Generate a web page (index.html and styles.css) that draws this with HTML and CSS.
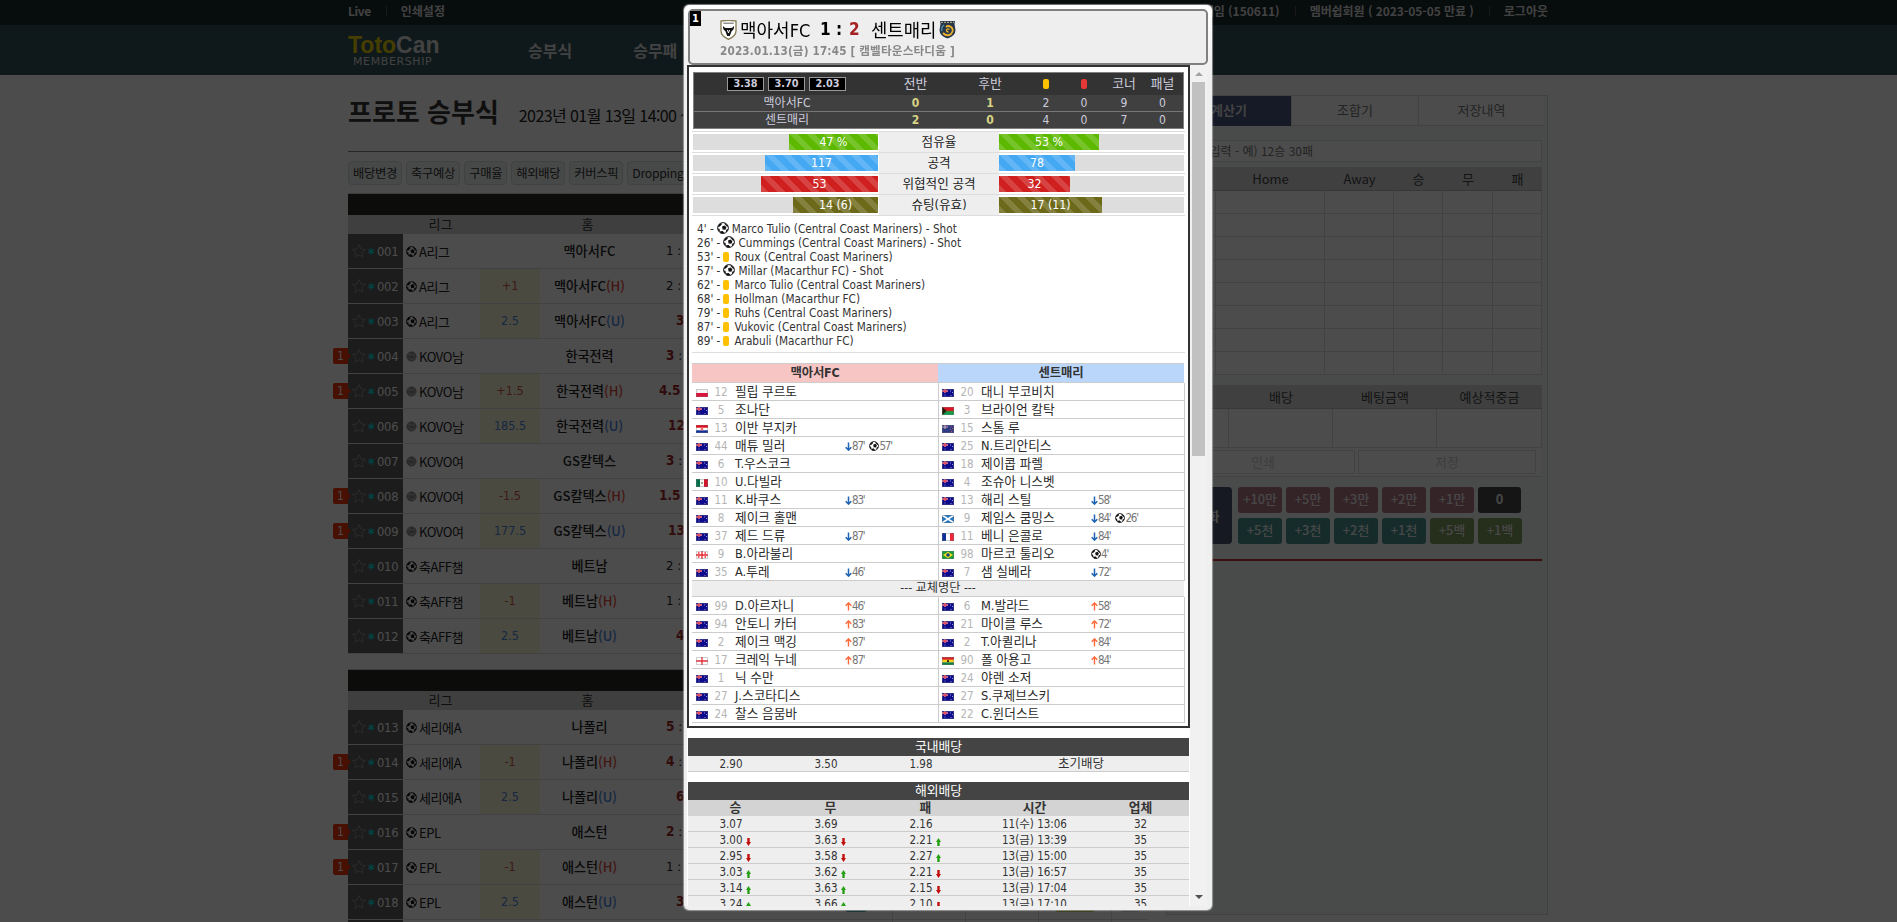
FILE: index.html
```
<!DOCTYPE html>
<html lang="ko">
<head>
<meta charset="utf-8">
<title>TotoCan - 프로토 승부식</title>
<link rel="stylesheet" href="styles.css">
</head>
<body>
<svg class="sprites" width="0" height="0">
  <symbol id="ball" viewBox="0 0 12 12"><circle cx="6" cy="6" r="5.400" fill="#fff" stroke="#222" stroke-width="1"/><path d="M5 4.600 7.600 3.400 9.400 5.200 8.400 7.800 5.600 7.400ZM.8 5l1.400-3 2.400-1 .2 1.600-2 2ZM7.500.8l3.200 2.400.4 1.600-1.300-.4L7.600 2ZM11.300 7l-1.600 3-1-.6.800-2ZM7.600 11.400H3.600L3 9.200 5.800 9ZM.6 6.400l1.800.4.6 2.400-1 .6Z" fill="#111"/></symbol>
  <symbol id="volley" viewBox="0 0 12 12"><circle cx="6" cy="6" r="5" fill="#b0b0b0" stroke="#777" stroke-width="1"/><path d="M2.500 4.500 5 8l1-3.500L7.500 8l2-3.500M2 7l2 2.500M5 2.500h3" fill="none" stroke="#666" stroke-width=".9"/></symbol>
  <symbol id="star" viewBox="0 0 16 16"><path d="M8 1.500 9.900 6l4.700.4-3.600 3.100 1.100 4.700L8 11.700l-4.100 2.500L5 9.500 1.400 6.400 6.100 6Z" fill="none" stroke="#8f8f8f" stroke-width="1"/></symbol>
  <symbol id="down" viewBox="0 0 7 9"><path d="M3.500.5v7.500M.7 5.200l2.800 2.900 2.800-2.900" fill="none" stroke="#1e63b4" stroke-width="1.500"/></symbol>
  <symbol id="up" viewBox="0 0 7 9"><path d="M3.500 8.500V1M.7 3.800 3.500.9l2.800 2.900" fill="none" stroke="#ff6a3c" stroke-width="1.400"/></symbol>
  <symbol id="fall" viewBox="0 0 5 8"><path d="M1.300 0h2.400v4H5L2.500 8 0 4h1.300Z" fill="#c40d0d"/></symbol>
  <symbol id="rise" viewBox="0 0 5 8"><path d="M1.300 8h2.400V4H5L2.500 0 0 4h1.300Z" fill="#25a015"/></symbol>
  <symbol id="au" viewBox="0 0 12 8"><path d="M0 0h12v8H0z" fill="#0b0b8c"/><path d="M0 2h6M3 0v4" stroke="#d9b6dd" stroke-width="1.300"/><path d="M0 2h6M3 0v4" stroke="#f0303a" stroke-width="1"/><path d="M2.500 6h1M8 2h1M10 3.500h1M8.500 6.500h1" stroke="#b9b9e6" stroke-width=".8"/></symbol>
  <symbol id="nz" viewBox="0 0 12 8"><path d="M0 0h12v8H0z" fill="#2c3a84"/><path d="M0 2h6M3 0v4" stroke="#c9a4b5" stroke-width="1.200"/><path d="M8.500 2h1M8 4.500h1M10 3.500h1M9 6.500h1" stroke="#d0526c" stroke-width=".9"/></symbol>
  <symbol id="pl" viewBox="0 0 12 8"><path d="M0 0h12v4H0z" fill="#f4f4f4"/><path d="M0 4h12v4H0z" fill="#dc143c"/></symbol>
  <symbol id="hr" viewBox="0 0 12 8"><path d="M0 0h12v3H0z" fill="#e00b1c"/><path d="M0 2.700h12v2.600H0z" fill="#fff"/><path d="M0 5.300h12V8H0z" fill="#10309a"/><path d="M4.800 2h2.400v3.500H4.800z" fill="#e86a6a"/></symbol>
  <symbol id="mx" viewBox="0 0 12 8"><path d="M0 0h4v8H0z" fill="#04704b"/><path d="M4 0h4v8H4z" fill="#f6f6f6"/><path d="M8 0h4v8H8z" fill="#d0142c"/><path d="M5.300 3h1.400v2H5.300z" fill="#8a7a50"/></symbol>
  <symbol id="ge" viewBox="0 0 12 8"><path d="M0 0h12v8H0z" fill="#fff"/><path d="M0 4h12M6 0v8M2 2h1.500M8.500 2H10M2 6h1.500M8.500 6H10" stroke="#e8202a" stroke-width="1.300"/></symbol>
  <symbol id="en" viewBox="0 0 12 8"><path d="M0 0h12v8H0z" fill="#fff"/><path d="M0 4h12M6 0v8" stroke="#e2303c" stroke-width="1.300"/></symbol>
  <symbol id="sc" viewBox="0 0 12 8"><path d="M0 0h12v8H0z" fill="#2174c4"/><path d="m0 0 12 8M12 0 0 8" stroke="#fff" stroke-width="1.700"/></symbol>
  <symbol id="fr" viewBox="0 0 12 8"><path d="M0 0h4v8H0z" fill="#10309a"/><path d="M4 0h4v8H4z" fill="#fff"/><path d="M8 0h4v8H8z" fill="#ee2438"/></symbol>
  <symbol id="br" viewBox="0 0 12 8"><path d="M0 0h12v8H0z" fill="#159a3c"/><path d="m6 .8 5 3.200-5 3.200L1 4Z" fill="#f5dc18"/><circle cx="6" cy="4" r="1.800" fill="#123b8c"/></symbol>
  <symbol id="vu" viewBox="0 0 12 8"><path d="M0 0h12v4H0z" fill="#dc1428"/><path d="M0 4h12v4H0z" fill="#139a4a"/><path d="M0 0l5 4-5 4Z" fill="#221c08"/><path d="M3 4h9" stroke="#8a5a10" stroke-width=".6"/></symbol>
  <symbol id="gh" viewBox="0 0 12 8"><path d="M0 0h12v3H0z" fill="#d8232a"/><path d="M0 2.700h12v2.700H0z" fill="#fad01c"/><path d="M0 5.300h12V8H0z" fill="#128040"/><path d="M5 3.300h2v1.600H5z" fill="#221c08"/></symbol>
</svg>

<div class="page">
  <div class="topbar"><div class="wrap topbar-in">
    <div class="links"><span class="live">Live</span><i></i><span>인쇄설정</span></div>
    <div class="links right"><span>닉네임 (150611)</span><i></i><span class="member">멤버쉽회원 ( 2023-05-05 만료 )</span><i></i><span>로그아웃</span></div>
  </div></div>
  <div class="nav"><div class="wrap nav-in">
    <div class="logo"><div class="brand"><b>Toto</b>Can</div><div class="sub">MEMBERSHIP</div></div>
    <div class="menu"><span>승부식</span><span>승무패</span></div>
  </div></div>
  <div class="wrap cols">
    <div class="main">
      <div class="title"><h1>프로토 승부식</h1><span>2023년 01월 13일 14:00 ~</span></div>
      <div class="tools"><span>배당변경</span><span>축구예상</span><span>구매율</span><span>해외배당</span><span>커버스픽</span><span>Dropping Odds</span></div>
      <div id="games"></div>
    </div>
    <div class="panel">
      <div class="tabs"><span class="on">계산기</span><span>조합기</span><span>저장내역</span></div>
      <div class="quick">프로토입력 - 예) 12승 30패</div>
      <div class="picks" id="picks"></div>
      <div class="sum">
        <b></b><b>배당</b><b>베팅금액</b><b>예상적중금</b>
        <span></span><span></span><span></span><span></span>
      </div>
      <div class="actions"><span>인쇄</span><span>저장</span></div>
      <div class="chips">
        <span class="reset">초기화</span>
        <div class="chipgrid">
          <span>+10만</span><span>+5만</span><span>+3만</span><span>+2만</span><span>+1만</span><span class="zero">0</span>
          <span class="teal">+5천</span><span class="teal">+3천</span><span class="teal">+2천</span><span class="teal">+1천</span><span class="olive">+5백</span><span class="olive">+1백</span>
        </div>
      </div>
      <div class="redline"></div>
    </div>
  </div>
</div>
<div class="scrim"></div>

<div class="modal">
  <div class="mhead">
    <span class="idx">1</span>
    <div class="match">
      <svg width="17" height="20" viewBox="0 0 17 20"><path d="M1 1q7.500-1.200 15 0v10q0 5-7.500 8.400Q1 16 1 11Z" fill="#fff" stroke="#857a52" stroke-width="1.300"/><path d="M3.300 3.200h10.400" stroke="#777" stroke-width="1.200"/><path d="M3 6q1.500 2 3 2h5q1.500 0 3-2 .3 4-2.300 5L9.800 16H7.200L5.300 11Q2.700 10 3 6Z" fill="#111"/><path d="m7.400 10 1.100 3L9.600 10" stroke="#fff" fill="none"/></svg>
      <span class="t1">맥아서FC</span><span class="sc1">1</span><span class="scc">:</span><span class="sc2">2</span><span class="t2">센트매리</span>
      <svg width="17" height="19" viewBox="0 0 17 19"><path d="M1 1h15l-.5 3 1 6q0 6-8 8.500Q.5 16 .5 10l1-6Z" fill="#28384a"/><path d="M2 2.300h13" stroke="#a9a27c" stroke-width="1.300" stroke-dasharray="2 1"/><path d="M4 13q4 4 8 1 3.500-4 0-7-3-2-5 0" fill="none" stroke="#eab02c" stroke-width="1.800"/><path d="M10.500 9.500q-2-1.500-3 .5 0 2 2 2" fill="none" stroke="#eab02c" stroke-width="1.300"/><path d="M3 11q-1-4 2-6" fill="none" stroke="#4b97b5" stroke-width="1.200"/></svg>
    </div>
    <div class="when">2023.01.13(금) 17:45 [ 캠벨타운스타디움 ]</div>
  </div>
  <div class="mbody">
    <div class="scroll">
      <div class="frame">
        <div class="score">
          <div class="srow h"><span class="od"><b>3.38</b><b>3.70</b><b>2.03</b></span><span>전반</span><span>후반</span><span><i class="card"></i></span><span><i class="card red"></i></span><span>코너</span><span>패널</span></div>
          <div class="srow"><span>맥아서FC</span><strong>0</strong><strong>1</strong><span>2</span><span>0</span><span>9</span><span>0</span></div>
          <div class="srow"><span>센트매리</span><strong>2</strong><strong>0</strong><span>4</span><span>0</span><span>7</span><span>0</span></div>
        </div>
        <div class="bars" id="bars"></div>
        <div class="events" id="events"></div>
        <div class="lineup">
          <div class="lhead"><span>맥아서FC</span><span>센트매리</span></div>
          <div id="starters"></div>
          <div class="lsub">--- 교체명단 ---</div>
          <div id="subs"></div>
        </div>
      </div>
      <div class="odds">
        <div class="ohead">국내배당</div>
        <div class="orow first"><span>2.90<i></i></span><span>3.50<i></i></span><span>1.98<i></i></span><span class="wide">초기배당</span></div>
      </div>
      <div class="odds">
        <div class="ohead">해외배당</div>
        <div class="orow cols-h"><span>승</span><span>무</span><span>패</span><span>시간</span><span>업체</span></div>
        <div id="foreign"></div>
      </div>
    </div>
    <div class="sbar"><i class="au"></i><i class="thumb"></i><i class="ad"></i></div>
  </div>
</div>
<script src="script.js"></script>
</body>
</html>
```
FILE: styles.css
```
* { box-sizing: border-box; }
body { margin: 0; height: 922px; overflow: hidden; background: #fff; color: #333; font: 11.5px "DejaVu Sans Condensed", "DejaVu Sans", "Noto Sans CJK KR", sans-serif; }
i { font-style: normal; }
.sprites { display: block; position: absolute; }
.page { height: 922px; overflow: hidden; font-family: "Noto Sans CJK KR", sans-serif; }
.wrap { width: 1200px; margin-left: 348px; }
.topbar { height: 25px; background: #1a282a; color: #ddd; font-size: 12px; font-weight: bold; }
.topbar-in { display: flex; justify-content: space-between; }
.links { display: flex; align-items: center; height: 21px; white-space: nowrap; }
.links span { flex: none; }
.links i { width: 1px; height: 10px; background: #555; margin: 0 14px 0 15px; }
.links .live { letter-spacing: -.4px; }
.links .member { letter-spacing: -.05px; }
.nav { height: 50px; background: #325357; }
.nav-in { display: flex; }
.logo { width: 180px; padding-top: 8px; }
.brand { font: bold 23px/24px "Liberation Sans", sans-serif; color: #ddd; }
.brand b { color: #e8d000; }
.sub { margin: -1px 0 0 5px; font: 11px/12px "DejaVu Sans", sans-serif; letter-spacing: .6px; color: #ddd; }
.menu { display: flex; gap: 61px; font-size: 16px; font-weight: bold; line-height: 50px; color: #ddd; }
.cols { display: flex; justify-content: space-between; }
.main { width: 800px; }
.title { display: flex; align-items: baseline; height: 77px; padding-top: 16px; border-bottom: 1px solid #888; color: #333; }
h1 { margin: 0 20px 0 0; font-size: 26px; line-height: 40px; }
.title span { font-size: 16px; letter-spacing: -.58px; color: #222; }
.tools { display: flex; gap: 4px; padding: 9px 0 8px; height: 41px; }
.tools span { flex: none; height: 24px; padding: 0 4px; border: 1px solid #d5dedb; border-radius: 4px; background: #eff5f2; font-size: 12.300px; line-height: 22px; color: #333; letter-spacing: -.3px; min-width: 43px; text-align: center; }
.blk { margin-bottom: 15px; }
.bhead { height: 22px; background: #2b2a26; border-top: 1px solid #ccc; }
.bcols { height: 19px; display: grid; grid-template-columns: 185px 109px 1fr; background: #d3d3d3; font-size: 13px; line-height: 18px; text-align: center; }
.game { position: relative; display: grid; grid-template-columns: 55px 77px 60px 99px 181px 1fr; height: 35px; border-bottom: 1px solid #dcdcdc; line-height: 33px; font-size: 13px; }
.game .no { display: flex; align-items: center; height: 34px; padding-left: 3px; background: #5e5e5e; color: #fff; font-family: "DejaVu Sans Condensed", sans-serif; font-size: 12.800px; letter-spacing: -.2px; }
.game .no i { width: 10px; padding: 5px 0 0 1px; color: #00e4e4; font-size: 14px; font-weight: bold; }
.lg { display: flex; align-items: center; gap: 2px; padding-left: 3px; letter-spacing: -.4px; white-space: nowrap; color: #222; }
.hc { text-align: center; font-family: "DejaVu Sans Condensed", sans-serif; font-size: 12.500px; }
.hc.on { background: #fbf8d8; height: 34px; }
.hm .H { color: #e04c40; }
.neg, .hm .U { color: #4a86dc; }
.pos { color: #c8584a; }
.hm { text-align: center; font-size: 13.100px; font-weight: 500; color: #222; white-space: nowrap; }
.sc { padding-left: 27px; font: 13px/33px "DejaVu Sans Condensed", sans-serif; color: #222; }
.sc b { color: #a02828; font-size: 13.500px; }
.sc.s1 { padding-left: 20px; }
.sc.s2 { padding-left: 29px; }
.sc.s3 { padding-left: 37px; }
.bets { display: grid; grid-template-columns: 73px 73px 73px 73px 36px; }
.bets i { display: flex; align-items: center; justify-content: center; border-right: 1px solid #dcdcdc; height: 34px; }
.bets i:last-child { border: 0; }
.bets u { height: 21px; width: 22px; margin-bottom: 1px; border-radius: 3px; background: #469390; }
.bets u.y { width: 40px; background: #b9bd52; }
.bets u.g { width: 20px; border: 1px solid #ccc; background: #f4f4f4; }
.tag { position: absolute; left: -15px; top: 9px; width: 15px; height: 16px; border-radius: 2px 0 0 2px; background: #f0340c; color: #fff; font: 12px/16px "DejaVu Sans Condensed", sans-serif; text-align: center; }
.tag::after { content: ""; position: absolute; left: 15px; top: 5px; border: 3px solid transparent; border-left-color: #f0340c; border-right: 0; }

.panel { width: 382px; height: 820px; margin-top: 20px; padding: 0 4px 0 0; border: 1px solid #d3dedb; background: #f0fbf7; font-size: 13px; color: #777; }
.tabs { display: grid; grid-template-columns: 124px 127px 126px; height: 30px; line-height: 28px; text-align: center; }
.tabs span { background: #fff; border-bottom: 1px solid #ddd; border-left: 1px solid #ddd; }
.tabs .on { background: #465780; border: 0; color: #ddd; font-weight: bold; }
.quick { margin: 14px 0 5px 4px; height: 22px; border: 1px solid #ddd; background: #fff; width: 371px; padding-right: 228px; text-align: right; line-height: 20px; font-size: 12px; white-space: nowrap; }
.picks { margin-left: 4px; width: 371px; display: grid; grid-template-columns: 45px 109px 69px 49px 50px 49px; grid-template-rows: 24px; grid-auto-rows: 23px; text-align: center; }
.picks b, .sum b { font-weight: normal; background: #d6d6d6; border-bottom: 1px solid #bbb; color: #444; line-height: 23px; }
.picks span, .sum span { background: #fff; border: 0 solid #ddd; border-width: 0 1px 1px 0; }
.sum { margin: 10px 0 0 4px; width: 371px; display: grid; grid-template-columns: 58px 104px 104px 105px; grid-template-rows: 24px 39px; text-align: center; }
.actions { display: flex; gap: 3px; width: 371px; margin-left: 4px; padding-top: 2px; height: 29px; background: #fff; border-bottom: 1px solid #ddd; text-align: center; color: #ccc; line-height: 22px; }
.actions span { width: 184px; border: 1px solid #ddd; height: 24px; }
.actions span + span { width: 178px; }
.chips { display: flex; gap: 6px; margin: 10px 0 0 4px; width: 371px; height: 57px; background: #f4f9f7; color: #eee; }
.reset { width: 61px; background: #4a5272; border-radius: 4px; line-height: 57px; text-align: center; font-weight: bold; }
.chipgrid { display: grid; grid-template-columns: repeat(6, 44px); grid-template-rows: 26px 26px; gap: 5px 4px; text-align: center; line-height: 24px; font-size: 12.800px; font-weight: 500; }
.chipgrid span { background: #b07684; border-radius: 3px; }
.chipgrid .zero { background: #484848; font-weight: bold; width: 43px; }
.chipgrid .teal { background: #469390; }
.chipgrid .olive { background: #7f9960; }
.redline { margin: 15px 0 0 4px; width: 371px; height: 2px; background: #cc3030; }
.scrim { position: fixed; inset: 0; background: rgba(0, 0, 0, .7); }

.modal { position: fixed; left: 684px; top: 5px; width: 528px; height: 905px; padding: 4px 4px 4px 3px; border-radius: 5px; background: linear-gradient(#fff, #efefef 8%); box-shadow: 0 0 1px 1px rgba(200, 200, 200, .6); }
.mhead { position: relative; margin-left: 1px; height: 56px; border: 2px solid #808080; border-radius: 5px; background: #eee; padding: 7px 0 0 30px; }
.idx { position: absolute; left: 0; top: 0; width: 11px; height: 15px; background: #000; color: #fff; font: bold 11px/15px "DejaVu Sans Condensed", sans-serif; text-align: center; }
.match { display: flex; align-items: center; height: 21px; color: #000; font-size: 17px; white-space: nowrap; }
.match span { flex: none; }
.match svg { flex: none; margin-top: 2px; }
.t1 { width: 83px; padding-left: 3px; font-size: 18px; letter-spacing: 0; }
.sc1 { width: 15px; font-weight: bold; }
.scc { width: 14px; padding-left: 1px; font-weight: bold; }
.sc2 { width: 22px; font-weight: bold; color: #a52020; }
.t2 { width: 68px; font-size: 17.800px; }
.when { margin-top: 4px; font-size: 11.600px; line-height: 17px; font-weight: bold; color: #888; letter-spacing: .19px; }
.mbody { display: flex; height: 841px; overflow: hidden; }
.scroll { width: 503px; background: #fff; overflow: hidden; flex: none; }
.sbar { width: 17px; background: #f1f1f1; display: flex; flex-direction: column; align-items: center; padding: 7px 0 7px; }
.sbar .au { border: 4px solid transparent; border-bottom-color: #a3a3a3; border-top: 0; margin-bottom: 6px; }
.sbar .thumb { width: 13px; height: 374px; background: #c1c1c1; }
.sbar .ad { margin-top: auto; border: 4px solid transparent; border-top-color: #505050; border-bottom: 0; }
.frame { height: 663px; border: 2px solid #333; padding: 5px 3px 0; background: #fff; }
.score { margin: 0 1px 2px; height: 57px; border: 1px solid #808080; background: #404040; color: #ccccdd; }
.srow { display: grid; grid-template-columns: 186px 71px 78px 34px 42px 38px 39px; height: 16px; line-height: 16px; text-align: center; font-size: 12px; }
.srow + .srow + .srow { border-top: 1px solid #777; height: 17px; line-height: 17px; }
.srow.h { height: 22px; background: #333; line-height: 22px; font-size: 12.800px; }
.srow strong { color: #d8d484; }
.srow span { white-space: nowrap; }
.od { display: flex; gap: 4px; padding: 4px 0 0 33px; }
.od b { width: 37px; height: 14px; border: 1px solid #999; background: #000; line-height: 12px; font-size: 10.800px; }
.card { display: inline-block; width: 6px; height: 10px; border-radius: 2px; background: #fdc102; vertical-align: -1px; }
.card.red { background: #e53935; }
.bar { display: grid; grid-template-columns: 186px 120px 185px; border-top: 1px solid #ddd; height: 21px; padding-left: 1px; text-align: center; line-height: 17px; }
.tr { margin: 2px 0; height: 16px; background: #ddd; display: flex; color: #fff; font-size: 12.200px; }
.bar .l { justify-content: flex-end; width: 185px; }
.bar em { font-style: normal; background: #eee; line-height: 19px; font-size: 12.600px; color: #222; }
.bar .tr span { background-image: linear-gradient(45deg, rgba(255,255,255,.16) 25%, transparent 25%, transparent 50%, rgba(255,255,255,.16) 50%, rgba(255,255,255,.16) 75%, transparent 75%); background-size: 17px 17px; }
.c0 { background-color: #5cb900; } .c1 { background-color: #45a8f3; } .c2 { background-color: #cf1f1f; } .c3 { background-color: #6d691a; }
.events { border: 1px solid #ddd; border-width: 1px 0; height: 138px; padding: 6px 5px 0; font-size: 11.700px; }
.events div { display: flex; align-items: center; height: 14px; white-space: pre; }
.events .card { width: 6px; height: 10px; margin: 0 5px 0 3px; }
.events svg { width: 12px; height: 12px; margin: -2px 3px 0 3px; }
.lineup { margin-top: 10px; width: 493px; }
.lhead { display: grid; grid-template-columns: 246px 246px; height: 20px; border-top: 1px solid #ccc; border-bottom: 1px solid #ccc; line-height: 18px; font-size: 12.400px; font-weight: bold; letter-spacing: -.2px; text-align: center; width: 492px; }
.lhead span:first-child { background: #f8c5c5; } .lhead span:last-child { background: #bbd6fb; }
.lrow { display: grid; grid-template-columns: 246px 247px; height: 18px; border-bottom: 1px solid #ccc; border-right: 1px solid #ccc; }
.pl { display: grid; grid-template-columns: 12px 26px 111px 1fr; padding-left: 4px; line-height: 16px; align-items: center; height: 17px; white-space: nowrap; }
.pl + .pl { border-left: 1px solid #ccc; padding-left: 3px; }
.pl .flag { width: 12px; height: 8px; outline: 1px solid rgba(120,120,120,.35); outline-offset: -1px; margin-top: 2px; }
.pl .n { text-align: center; color: #b5b5b5; }
.pl .nm { font-size: 12.700px; padding-left: 1px; color: #2a2a2a; }
.pl .ev { display: flex; align-items: center; color: #777; letter-spacing: -1.200px; margin-top: 1px; }
.ev svg.ar { width: 7px; height: 9px; } .ev svg.bl { width: 10px; height: 10px; } .ev span { margin-right: 5px; }
.lsub { height: 16px; width: 492px; background: #eee; border-bottom: 1px solid #ccc; text-align: center; line-height: 15px; font-size: 12.200px; }
.odds { margin: 10px 1px 0; }
.ohead { height: 18px; background: #444; color: #fff; text-align: center; line-height: 18px; font-size: 12.800px; }
.orow { display: grid; grid-template-columns: 95px 95px 95px 123px 89px; height: 16px; line-height: 16px; background: #eee; border-bottom: 1px solid #ccc; text-align: center; color: #333; white-space: nowrap; }
.orow.cols-h { background: #d3d3d3; font-weight: bold; font-size: 12.800px; line-height: 15px; border: 0; }
.orow .wide { grid-column: 4 / 6; padding-left: 4px; font-size: 12.500px; }
.orow span i { display: inline-block; width: 9px; }
.orow span svg { width: 5px; height: 8px; margin: 0 1px 0 3px; vertical-align: -2px; }
```
FILE: script.js
```
const svg = (id, cls, w = 12, h = 12) => `<svg class="${cls}" width="${w}" height="${h}"><use href="#${id}"/></svg>`;
const $ = id => document.getElementById(id);

// number | tag | icon | league | handicap | home | side | score | score layout
const games = [
  ['001', 0, 'ball', 'A리그', '', '맥아서FC', '', '1 :', 's0'],
  ['002', 0, 'ball', 'A리그', '+1', '맥아서FC', 'H', '2 :', 's0'],
  ['003', 0, 'ball', 'A리그', '2.5', '맥아서FC', 'U', '<b>3</b>', 's3'],
  ['004', 1, 'volley', 'KOVO남', '', '한국전력', '', '<b>3</b> :', 's0'],
  ['005', 1, 'volley', 'KOVO남', '+1.5', '한국전력', 'H', '<b>4.5</b>', 's1'],
  ['006', 0, 'volley', 'KOVO남', '185.5', '한국전력', 'U', '<b>12</b>', 's2'],
  ['007', 0, 'volley', 'KOVO여', '', 'GS칼텍스', '', '<b>3</b> :', 's0'],
  ['008', 1, 'volley', 'KOVO여', '-1.5', 'GS칼텍스', 'H', '<b>1.5</b>', 's1'],
  ['009', 1, 'volley', 'KOVO여', '177.5', 'GS칼텍스', 'U', '<b>13</b>', 's2'],
  ['010', 0, 'ball', '축AFF챔', '', '베트남', '', '2 :', 's0'],
  ['011', 0, 'ball', '축AFF챔', '-1', '베트남', 'H', '1 :', 's0'],
  ['012', 0, 'ball', '축AFF챔', '2.5', '베트남', 'U', '<b>4</b>', 's3'],
  ['013', 0, 'ball', '세리에A', '', '나폴리', '', '<b>5</b> :', 's0'],
  ['014', 1, 'ball', '세리에A', '-1', '나폴리', 'H', '<b>4</b> :', 's0'],
  ['015', 0, 'ball', '세리에A', '2.5', '나폴리', 'U', '<b>6</b>', 's3'],
  ['016', 1, 'ball', 'EPL', '', '애스턴', '', '<b>2</b> :', 's0'],
  ['017', 1, 'ball', 'EPL', '-1', '애스턴', 'H', '1 :', 's0'],
  ['018', 0, 'ball', 'EPL', '2.5', '애스턴', 'U', '<b>3</b>', 's3']
];
const bets = '<span class="bets"><i><u></u></i><i></i><i></i><i><u class="y"></u></i><i><u class="g"></u></i></span>';
const game = g => `<div class="game">${g[1] ? '<span class="tag">1</span>' : ''}<span class="no">${svg('star', '', 16, 16)}<i>*</i>${g[0]}</span>
<span class="lg">${svg(g[2], '', 11, 11)}<span>${g[3]}</span></span>
<span class="hc ${g[4] ? 'on' : ''} ${/^[+-]/.test(g[4]) ? 'pos' : 'neg'}">${g[4]}</span>
<span class="hm">${g[5]}${g[6] ? `<span class="${g[6]}">(${g[6]})</span>` : ''}</span><span class="sc ${g[8]}">${g[7]}</span>${bets}</div>`;
const nextRow = '<div class="game"><span class="no"></span><span></span><span></span><span></span><span></span><span class="bets"><i></i><i></i><i></i><i></i><i></i></span></div>';
const block = (list, tail = '') => `<div class="blk"><div class="bhead"></div><div class="bcols"><span>리그</span><span>홈</span><span></span></div>${list.map(game).join('')}${tail}</div>`;
$('games').innerHTML = block(games.slice(0, 12)) + block(games.slice(12), nextRow);

$('picks').innerHTML = ['', 'Home', 'Away', '승', '무', '패'].map(t => `<b>${t}</b>`).join('') + '<span></span>'.repeat(48);

$('bars').innerHTML = [
  ['47 %', 89, '점유율', '53 %', 100], ['117', 113, '공격', '78', 76],
  ['53', 117, '위협적인 공격', '32', 71], ['14 (6)', 85, '슈팅(유효)', '17 (11)', 103]
].map((b, i) => `<div class="bar"><div class="tr l"><span class="c${i}" style="width:${b[1]}px">${b[0]}</span></div><em>${b[2]}</em><div class="tr"><span class="c${i}" style="width:${b[4]}px">${b[3]}</span></div></div>`).join('');

$('events').innerHTML = [
  ["4'", 1, 'Marco Tulio (Central Coast Mariners) - Shot'], ["26'", 1, 'Cummings (Central Coast Mariners) - Shot'],
  ["53'", 0, 'Roux (Central Coast Mariners)'], ["57'", 1, 'Millar (Macarthur FC) - Shot'],
  ["62'", 0, 'Marco Tulio (Central Coast Mariners)'], ["68'", 0, 'Hollman (Macarthur FC)'],
  ["79'", 0, 'Ruhs (Central Coast Mariners)'], ["87'", 0, 'Vukovic (Central Coast Mariners)'], ["89'", 0, 'Arabuli (Macarthur FC)']
].map(e => `<div>${e[0]} -${e[1] ? svg('ball', '') : '<i class="card"></i>'}<span>${e[2]}</span></div>`).join('');

// flag | shirt number | name | events (d = off, u = on, g = goal)
const player = s => {
  const [f, n, nm, ev] = s.split('|');
  const evs = (ev || '').split(' ').filter(Boolean).map(e => (e[0] === 'g' ? svg('ball', 'bl') : svg(e[0] === 'd' ? 'down' : 'up', 'ar', 7, 9)) + `<span>${e.slice(1)}'</span>`).join('');
  return `<div class="pl">${svg(f, 'flag', 12, 8)}<span class="n">${n}</span><span class="nm">${nm}</span><span class="ev">${evs}</span></div>`;
};
const rows = list => list.map(r => `<div class="lrow">${player(r[0])}${player(r[1])}</div>`).join('');
$('starters').innerHTML = rows([
  ['pl|12|필립 쿠르토', 'au|20|대니 부코비치'], ['au|5|조나단', 'vu|3|브라이언 칼탁'],
  ['hr|13|이반 부지카', 'nz|15|스톰 루'], ['au|44|매튜 밀러|d87 g57', 'au|25|N.트리안티스'],
  ['au|6|T.우스코크', 'au|18|제이콥 파렐'], ['mx|10|U.다빌라', 'au|4|조슈아 니스벳'],
  ['au|11|K.바쿠스|d83', 'au|13|해리 스틸|d58'], ['au|8|제이크 홀맨', 'sc|9|제임스 쿰밍스|d84 g26'],
  ['au|37|제드 드류|d87', 'fr|11|베니 은콜로|d84'], ['ge|9|B.아라불리', 'br|98|마르코 툴리오|g4'],
  ['au|35|A.투레|d46', 'au|7|샘 실베라|d72']
]);
$('subs').innerHTML = rows([
  ['au|99|D.아르자니|u46', 'au|6|M.발라드|u58'], ['au|94|안토니 카터|u83', 'au|21|마이클 루스|u72'],
  ['au|2|제이크 맥깅|u87', 'au|2|T.아퀼리나|u84'], ['en|17|크레익 누네|u87', 'gh|90|폴 아용고|u84'],
  ['au|1|닉 수만', 'au|24|야렌 소저'], ['au|27|J.스코타디스', 'au|27|S.쿠제브스키'], ['au|24|찰스 음뭄바', 'au|22|C.윈더스트']
]);

const cell = v => `<span>${v.replace(/[-+]$/, '')}${/-$/.test(v) ? svg('fall', '', 5, 8) : /\+$/.test(v) ? svg('rise', '', 5, 8) : '<i></i>'}</span>`;
$('foreign').innerHTML = [
  ['3.07', '3.69', '2.16', '11(수) 13:06', 32], ['3.00-', '3.63-', '2.21+', '13(금) 13:39', 35],
  ['2.95-', '3.58-', '2.27+', '13(금) 15:00', 35], ['3.03+', '3.62+', '2.21-', '13(금) 16:57', 35],
  ['3.14+', '3.63+', '2.15-', '13(금) 17:04', 35], ['3.24+', '3.66+', '2.10-', '13(금) 17:10', 35]
].map(r => `<div class="orow">${r.slice(0, 3).map(cell).join('')}<span>${r[3]}</span><span>${r[4]}</span></div>`).join('');
```
